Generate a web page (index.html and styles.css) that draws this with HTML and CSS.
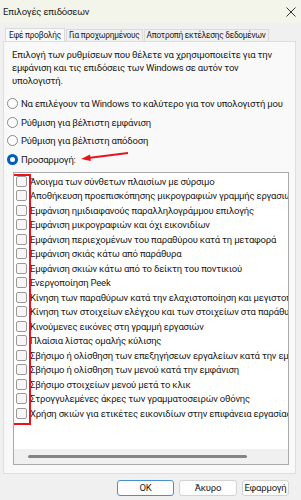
FILE: index.html
```html
<!DOCTYPE html>
<html lang="el">
<head>
<meta charset="utf-8">
<link rel="stylesheet" href="styles.css">
</head>
<body>
<div class="win">
  <div class="titlebar">
    <span class="title">Επιλογές επιδόσεων</span>
    <svg class="close" width="10" height="10" viewBox="0 0 10 10"><path d="M0.5 0.5L9.5 9.5M9.5 0.5L0.5 9.5" stroke="#333" stroke-width="1" fill="none"/></svg>
  </div>
  <div class="tabs">
    <div class="tab active">Εφέ προβολής</div>
    <div class="tab">Για προχωρημένους</div>
    <div class="tab">Αποτροπή εκτέλεσης δεδομένων</div>
  </div>
  <div class="panel">
    <p class="intro">Επιλογή των ρυθμίσεων που θέλετε να χρησιμοποιείτε για την<br>εμφάνιση και τις επιδόσεις των Windows σε αυτόν τον<br>υπολογιστή.</p>
    <div class="radios">
      <div class="radio"><span class="rb"></span>Να επιλέγουν τα Windows το καλύτερο για τον υπολογιστή μου</div>
      <div class="radio"><span class="rb"></span>Ρύθμιση για βέλτιστη εμφάνιση</div>
      <div class="radio"><span class="rb"></span>Ρύθμιση για βέλτιστη απόδοση</div>
      <div class="radio sel"><span class="rb on"></span>Προσαρμογή:
        <svg class="arrow" width="50" height="10" viewBox="0 0 50 10"><path d="M48 1L8 6" stroke="#e8141c" stroke-width="2" fill="none"/><path d="M1 7L10 2.5L10.8 9Z" fill="#e8141c"/></svg>
      </div>
    </div>
    <div class="listbox">
      <div class="items">
        <div class="item"><span class="cb"></span>Άνοιγμα των σύνθετων πλαισίων με σύρσιμο</div>
        <div class="item"><span class="cb"></span>Αποθήκευση προεπισκόπησης μικρογραφιών γραμμής εργασιών</div>
        <div class="item"><span class="cb"></span>Εμφάνιση ημιδιαφανούς παραλληλογράμμου επιλογής</div>
        <div class="item"><span class="cb"></span>Εμφάνιση μικρογραφιών και όχι εικονιδίων</div>
        <div class="item"><span class="cb"></span>Εμφάνιση περιεχομένων του παραθύρου κατά τη μεταφορά</div>
        <div class="item"><span class="cb"></span>Εμφάνιση σκιάς κάτω από παράθυρα</div>
        <div class="item"><span class="cb"></span>Εμφάνιση σκιών κάτω από το δείκτη του ποντικιού</div>
        <div class="item"><span class="cb"></span>Ενεργοποίηση Peek</div>
        <div class="item"><span class="cb"></span>Κίνηση των παραθύρων κατά την ελαχιστοποίηση και μεγιστοποίηση</div>
        <div class="item"><span class="cb"></span>Κίνηση των στοιχείων ελέγχου και των στοιχείων στα παράθυρα</div>
        <div class="item"><span class="cb"></span>Κινούμενες εικόνες στη γραμμή εργασιών</div>
        <div class="item"><span class="cb"></span>Πλαίσια λίστας ομαλής κύλισης</div>
        <div class="item"><span class="cb"></span>Σβήσιμο ή ολίσθηση των επεξηγήσεων εργαλείων κατά την εμφάνιση</div>
        <div class="item"><span class="cb"></span>Σβήσιμο ή ολίσθηση των μενού κατά την εμφάνιση</div>
        <div class="item"><span class="cb"></span>Σβήσιμο στοιχείων μενού μετά το κλικ</div>
        <div class="item"><span class="cb"></span>Στρογγυλεμένες άκρες των γραμματοσειρών οθόνης</div>
        <div class="item"><span class="cb"></span>Χρήση σκιών για ετικέτες εικονιδίων στην επιφάνεια εργασίας</div>
      </div>
      <div class="hscroll"><span class="thumb"></span></div>
      <div class="redbox"></div>
    </div>
  </div>
  <div class="footer">
    <button class="btn default">OK</button>
    <button class="btn cancel">Άκυρο</button>
    <button class="btn apply">Εφαρμογή</button>
  </div>
</div>
</body>
</html>
```

FILE: styles.css
```css
* { box-sizing: border-box; }
html, body { margin: 0; padding: 0; }
body {
  width: 301px;
  height: 500px;
  overflow: hidden;
  background: #f0f0f0;
  font-family: Roboto, "Noto Sans", sans-serif;
  font-size: 9.5px;
  letter-spacing: -0.2px;
  color: #1a1a1a;
}
.win { display: flex; flex-direction: column; width: 301px; height: 500px; overflow: hidden; }
.titlebar {
  height: 23px;
  background: #f3f4ea;
  display: flex;
  align-items: center;
  justify-content: space-between;
  padding: 0 4px 0 3px;
  flex: none;
}
.title { font-size: 9.5px; color: #222; }
.close { margin-right: 1px; }
.tabs {
  display: flex;
  align-items: flex-end;
  height: 18px;
  padding-left: 5px;
  flex: none;
  position: relative;
  z-index: 2;
  overflow: hidden;
}
.tab {
  height: 12px;
  line-height: 11px;
  font-size: 8.3px;
  letter-spacing: -0.25px;
  padding: 0 2px;
  border: 1px solid #dadada;
  border-bottom: none;
  background: #f0f0f0;
  margin-right: 1px;
  color: #222;
  white-space: nowrap;
}
.tab.active {
  height: 14px;
  line-height: 13px;
  background: #f9f9f9;
  margin-bottom: -1px;
  padding: 0 3px;
}
.panel {
  margin: 0 5px 0 3px;
  height: 433px;
  background: #f9f9f9;
  border: 1px solid #dedede;
  padding: 7px 7px 0 3px;
  flex: none;
  position: relative;
  overflow: hidden;
}
.intro {
  margin: 0 0 0 5px;
  line-height: 12.8px;
  white-space: nowrap;
}
.radios { margin-top: 7px; }
.radio {
  height: 18.6px;
  display: flex;
  align-items: center;
  white-space: nowrap;
  position: relative;
}
.rb {
  width: 11px;
  height: 11px;
  border-radius: 50%;
  border: 1px solid #8a8a8a;
  background: #fdfdfd;
  margin-right: 3px;
  flex: none;
}
.rb.on {
  border: 3.5px solid #005fb8;
  background: #fff;
}
.arrow { position: absolute; left: 73px; top: 2px; }
.listbox {
  margin-top: 3px;
  margin-left: 6px;
  width: 276px;
  height: 293px;
  background: #fff;
  border: 1px solid #a9a9a9;
  position: relative;
  display: flex;
  flex-direction: column;
  overflow: hidden;
}
.items { flex: 1; padding-top: 1px; overflow: hidden; }
.item {
  height: 14.5px;
  display: flex;
  align-items: center;
  white-space: nowrap;
  padding-left: 2px;
}
.cb {
  width: 11px;
  height: 11px;
  border: 1px solid #9a9a9a;
  border-radius: 2px;
  background: #f6f6f6;
  margin-right: 3px;
  flex: none;
}
.hscroll {
  height: 15px;
  background: #f0f0f0;
  flex: none;
  display: flex;
  align-items: center;
  padding-left: 14px;
}
.thumb {
  width: 219px;
  height: 3px;
  border-radius: 2px;
  background: #858585;
}
.redbox {
  position: absolute;
  left: -4px;
  top: 1px;
  width: 21px;
  height: 251px;
  border: 2.5px solid #e8141c;
}
.footer {
  flex: 1;
  display: flex;
  justify-content: flex-end;
  align-items: flex-start;
  padding: 6px 12px 0 0;
  gap: 5px;
}
.btn {
  font-family: inherit;
  font-size: 9.5px;
  letter-spacing: -0.2px;
  height: 16px;
  padding: 0;
  border: 1px solid #d3d3d3;
  border-radius: 3px;
  background: #fdfdfd;
  color: #1a1a1a;
  line-height: 14px;
}
.btn.default { width: 57px; border-color: #4a8fd0; }
.btn.cancel { width: 58px; }
.btn.apply { width: 47px; }
```
